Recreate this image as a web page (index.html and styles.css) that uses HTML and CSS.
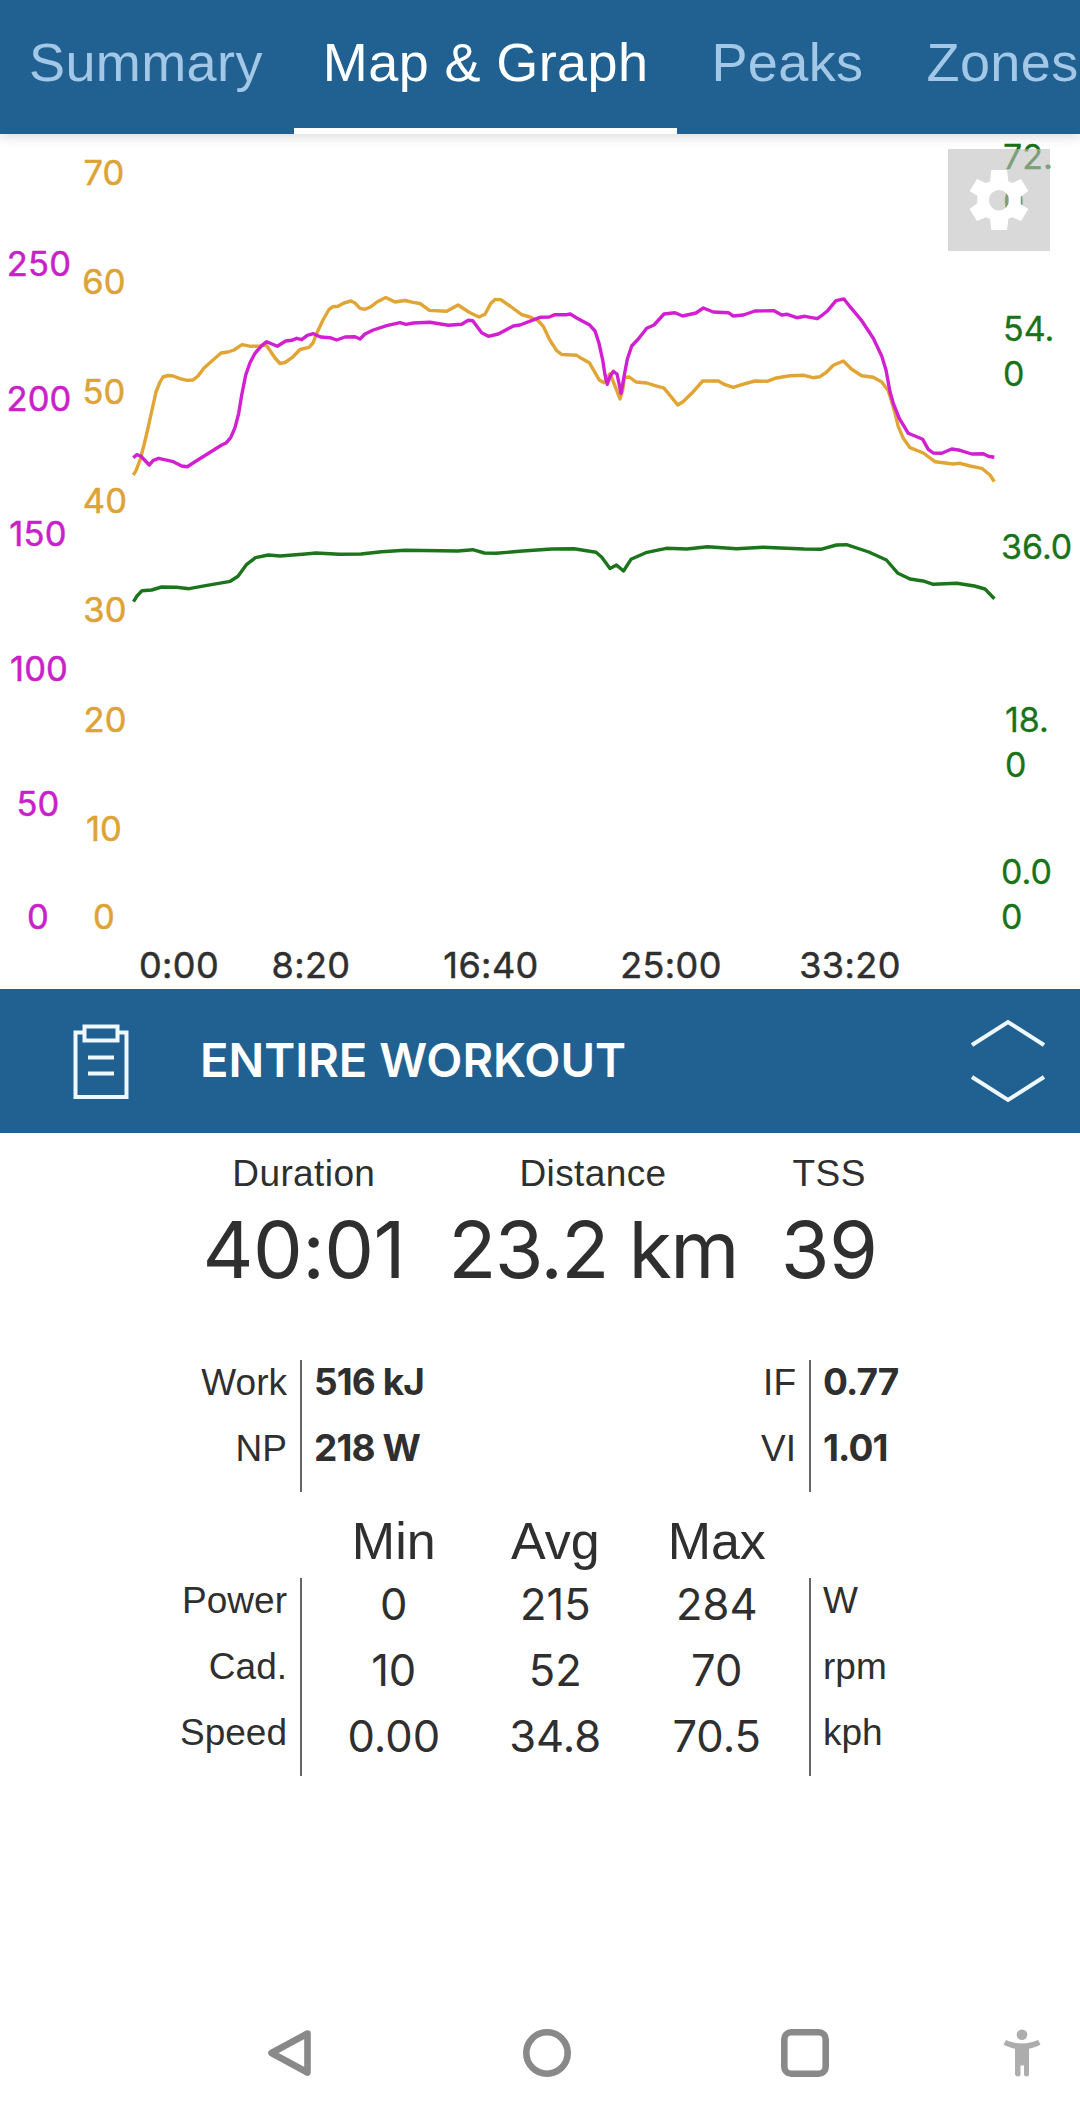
FILE: index.html
```
<!DOCTYPE html>
<html lang="en">
<head>
    <meta charset="UTF-8">
    <meta name="viewport" content="width=device-width, initial-scale=1.0">
    <title>Workout - Map &amp; Graph</title>
    <link rel="stylesheet" href="styles.css">
</head>
<body>
    <!-- Tabs -->
    <nav class="tabs">
        <a class="tab">Summary</a>
        <a class="tab active">Map &amp; Graph</a>
        <a class="tab">Peaks</a>
        <a class="tab">Zones</a>
    </nav>

    <!-- Graph -->
    <section class="graph">
        <svg class="chart" viewBox="0 134 1080 855" width="1080" height="855">
            <g class="axis power-axis">
                <text x="39" y="276">250</text>
                <text x="39" y="411">200</text>
                <text x="38" y="546">150</text>
                <text x="39" y="681">100</text>
                <text x="38" y="816">50</text>
                <text x="38" y="929">0</text>
            </g>
            <g class="axis cadence-axis">
                <text x="104" y="185">70</text>
                <text x="104" y="294">60</text>
                <text x="104" y="404">50</text>
                <text x="105" y="513">40</text>
                <text x="105" y="622">30</text>
                <text x="105" y="732">20</text>
                <text x="104" y="841">10</text>
                <text x="104" y="929">0</text>
            </g>
            <g class="axis speed-axis">
                <text x="1003" y="169">72.</text>
                <text x="1003" y="214">0</text>
                <text x="1003" y="341">54.</text>
                <text x="1003" y="386">0</text>
                <text x="1001" y="559">36.0</text>
                <text x="1005" y="732">18.</text>
                <text x="1005" y="777">0</text>
                <text x="1001" y="884">0.0</text>
                <text x="1001" y="929">0</text>
            </g>
            <g class="axis time-axis">
                <text x="179" y="978">0:00</text>
                <text x="311" y="978">8:20</text>
                <text x="491" y="978">16:40</text>
                <text x="671" y="978">25:00</text>
                <text x="850" y="978">33:20</text>
            </g>

            <polyline class="line speed" points="133.5,601.7 137,596 142,590.7 151.6,590 161.6,587 176.3,587.3 189.2,588.7 205.6,585.7 230.3,581.3 238,576.3 246.7,564.3 255.5,557.7 268.4,555 280,556 305.4,554 316,553 339.4,554.3 361,554 381.7,551.7 405,550.3 458,551 472.7,549.7 484.4,553 496,553.3 522.5,551 552,549 574,548.7 596,552.3 601.8,557.3 610,568.5 616.4,565 623.5,571 631,559.3 645.8,552.7 666.3,548.3 687,549 707.4,546.7 736.7,548.7 763,547.3 804,549 820.7,549.3 836.5,545 846.5,544.7 868.8,552 886.4,560 898,573.3 910,579 924.5,581.3 933.3,584.3 956.8,583.3 974.4,586 985,589 994.4,598.7"/>
            <polyline class="line cadence" points="133.3,475 136,470.7 140,460 144,445 148,428 152,410 156,392 160,382 163,377 168,375.5 173,376 180,378.6 187,380.3 193,380 198,376 204,368 213,360 221,353 228,352 234,350 242,344.7 251,346.3 260,346 266,345 269,349 275,358 280,363.5 285,362.5 292,357.7 300,349.5 309,347.3 313,343 317,332.7 323,320 329,309.5 333,306.7 338,306.3 344,303 351,301 355,303 360,308.3 365,309.3 371,306.7 377,302 385.7,297.5 395,302 405,300.5 413,302.4 420,303.5 429.5,310.4 446.7,311.3 458,305 470,312.7 479,317 485,314.3 490.7,303.5 495,299.5 500.7,299.6 510,306 521.7,314.7 530,317 538,320.5 543.5,326.7 549.5,339.5 556.7,350.7 561.7,354.5 576.7,355.3 581.7,358.6 589.3,362.7 595,372.7 599.3,380 604,382.7 610,373.7 615,386 620,399 622.7,390 624.5,377.5 629.3,377 636,382 646.7,383 655,385.7 664,388.2 671,396.7 677.7,405 683,401.7 691.7,393.3 702.7,381 718.3,381 725,384.7 733.3,387.3 741.7,384.7 755,381 767.3,381.3 775,378.3 790,375.7 804,375.3 812.7,377.7 820,376.7 826.7,372 833.3,365.3 843.3,361 851.7,369.3 861.7,375.7 873.3,377.3 881.7,382 888.3,390.7 891.7,401.7 895,413.3 898.3,426.7 903.3,438.3 910,447.7 923.3,453 935,461.7 953.3,464 960,463.3 970,466 981.7,468.3 990,475 994.3,481.7"/>
            <polyline class="line power" points="133.3,457.7 136.7,454.7 140.7,456 149.3,465 153.3,460.3 158.7,458.3 173.3,461.7 181.7,466 187.3,466.7 195,461.7 221.7,445 226,443 230.7,437.7 235,427.7 238.7,413.3 241.7,395 245.7,375 250,362.7 255,353.3 261.7,345.7 266.7,341.7 277.3,346.3 285.7,341 291.7,340.3 296.7,338.3 301.7,339.7 307.3,335.3 313.3,333.7 320.7,337 330,337.7 336.7,340 345,337 355,336.7 360,339 365,334 373.3,330 386.7,325.7 400,322.7 406,324.3 413.3,323 430,322.3 448.3,325.3 461.7,324.3 468.3,320.3 472.7,320.7 481.7,332.7 488.3,336.3 498.3,334 513.3,326 520,325 540,317.3 549.3,317 555,314.7 566.7,314.7 570.3,314 576.7,318 589.3,324.7 595,331 599,343.3 602.7,360 605,375 607.3,384.3 610,376.7 613.3,371.3 617,374 619,383.3 621,393.3 624,376.7 627.3,359.3 631.7,346 638.3,339 646.7,328.3 654,325 664,314 675,312.7 682.7,316 696,313 703.3,308 713.3,312 728.3,312.7 733.3,316 743.3,315 755,311 774,310.7 781.7,315 787.3,314.3 796.7,317.7 805,316.3 817.3,318.7 823.3,314.3 827.7,310.7 836,300.7 844,299 850,306.7 861.7,320.7 873.3,338.3 881.7,356 886,370 890,391.7 893.3,403.3 899.3,418.3 908.3,433.3 922.7,439.3 928.3,449.3 933.3,453 941.7,453.3 951.7,449 960,450.3 971.7,454 983.3,453.7 988.3,456.3 994.3,457.3"/>
        </svg>
        <button class="settings" aria-label="Graph settings">
            <svg viewBox="0 0 102 102" width="102" height="102">
                <path fill="#fff" fill-rule="evenodd" d="M43.3 21H59l1.4 11.5 4 1.6L73 30l7.4 12-7.7 5.7v7.6L80.4 60 73 72l-8.6-3.8-4 1.6L59 81H43.3L42 69.8l-4.2-1.6L29 72l-7.4-12 7.7-5.7v-7.6L21.6 42 29 30l8.6 4 4.4-1.6zM51 41a10.2 10.2 0 1 0 0 20.4A10.2 10.2 0 1 0 51 41z"/>
            </svg>
        </button>
    </section>

    <!-- Selected range -->
    <section class="range-bar">
        <svg class="clipboard" viewBox="0 0 58 76" width="58" height="76">
            <path d="M12 9.5H3.500V74H54.500V9.500H46M12.500 3.500H45.500V17.500H12.500zM16 34.500H42M16 50.500H42"/>
        </svg>
        <h1 class="range-title">ENTIRE WORKOUT</h1>
        <svg class="chevrons" viewBox="0 0 76 88" width="76" height="88">
            <path d="M2 28L38 5L74 28M2 60L38 83L74 60"/>
        </svg>
    </section>

    <!-- Workout stats -->
    <main class="stats">
        <div class="totals">
            <div class="total">
                <span class="total-label">Duration</span>
                <span class="total-value">40:01</span>
            </div>
            <div class="total">
                <span class="total-label">Distance</span>
                <span class="total-value distance">23.2 km</span>
            </div>
            <div class="total">
                <span class="total-label">TSS</span>
                <span class="total-value">39</span>
            </div>
        </div>

        <div class="metrics">
            <div class="names"><span>Work</span><span>NP</span></div>
            <div class="values"><span>516 kJ</span><span>218 W</span></div>
            <div class="names"><span>IF</span><span>VI</span></div>
            <div class="values"><span>0.77</span><span>1.01</span></div>
        </div>

        <div class="table-head">
            <span>Min</span>
            <span>Avg</span>
            <span>Max</span>
        </div>
        <div class="table">
            <div class="names"><span>Power</span><span>Cad.</span><span>Speed</span></div>
            <div class="cells">
                <span>0</span><span>215</span><span>284</span>
                <span>10</span><span>52</span><span>70</span>
                <span>0.00</span><span>34.8</span><span>70.5</span>
            </div>
            <div class="units"><span>W</span><span>rpm</span><span>kph</span></div>
        </div>
    </main>

    <!-- System navigation -->
    <footer class="system-nav">
        <svg class="nav-icon" viewBox="0 0 50 50" width="50" height="50">
            <path d="M42.500 5.500L6.500 25L42.500 44.500Z"/>
        </svg>
        <svg class="nav-icon" viewBox="0 0 50 50" width="50" height="50">
            <circle cx="24" cy="25" r="20.700"/>
        </svg>
        <svg class="nav-icon" viewBox="0 0 50 50" width="50" height="50">
            <rect x="4.300" y="4.300" width="41.400" height="41.400" rx="7"/>
        </svg>
        <svg class="person" viewBox="0 0 38 48" width="38" height="48">
            <circle cx="19" cy="5.800" r="5.300"/>
            <path d="M3 11C13 15.500 25 15.500 35 11L37.500 15.500C34 17.500 30 19 26 19.700V45.500Q26 47.500 23.500 47.500T21 45.500V36.500H17.500V45.500Q17.500 47.500 15 47.500T12 45.500V19.700C8 19 4 17.500.5 15.500Z"/>
        </svg>
    </footer>
</body>
</html>
```
FILE: styles.css
```
* {
    margin: 0;
    padding: 0;
    box-sizing: border-box;
}

body {
    width: 1080px;
    height: 2119px;
    display: flex;
    flex-direction: column;
    overflow: hidden;
    background: #fff;
    color: #2f2f2f;
    font-family: "Liberation Sans", Arial, sans-serif;
}

/* Tabs */
.tabs {
    display: flex;
    height: 134px;
    flex-shrink: 0;
    background: #206192;
    box-shadow: 0 2px 12px rgba(0, 0, 0, 0.16);
    position: relative;
    z-index: 1;
}

.tab {
    flex-shrink: 0;
    height: 134px;
    padding: 0 29px 0 34px;
    border-bottom: 6px solid transparent;
    font-size: 54px;
    line-height: 125px;
    letter-spacing: 0.4px;
    color: #a3c7e6;
}

.tab:first-child {
    padding-left: 29px;
    padding-right: 31px;
}

.tab.active {
    padding: 0 29px;
    color: #fff;
    border-bottom-color: #fff;
}

/* Graph */
.graph {
    position: relative;
    height: 855px;
    flex-shrink: 0;
}

.chart {
    display: block;
}

.axis text {
    font-family: Inter, "Liberation Sans", sans-serif;
    font-size: 34.5px;
    letter-spacing: 0.2px;
    text-anchor: middle;
    stroke-width: 0.5;
}

.power-axis {
    fill: #c921c9;
    stroke: #c921c9;
}

.cadence-axis {
    fill: #dda335;
    stroke: #dda335;
}

.axis.speed-axis text {
    fill: #1a7318;
    stroke: #1a7318;
    stroke-width: 0.3;
    font-size: 34px;
    letter-spacing: 0;
    text-anchor: start;
}

.axis.time-axis text {
    fill: #2f2f2f;
    stroke: #2f2f2f;
    font-size: 36px;
    letter-spacing: 0.4px;
}

.line {
    fill: none;
    stroke-width: 3.4;
    stroke-linejoin: round;
}

.line.power {
    stroke: #d11fd1;
}

.line.cadence {
    stroke: #e0a535;
}

.line.speed {
    stroke: #1c751b;
}

.settings {
    position: absolute;
    top: 15px;
    left: 948px;
    width: 102px;
    height: 102px;
    border: none;
    background: rgba(190, 190, 190, 0.59);
}

.settings svg {
    display: block;
}

/* Selected range */
.range-bar {
    display: flex;
    align-items: center;
    height: 144px;
    flex-shrink: 0;
    padding: 0 34px 0 72px;
    background: #206192;
}

.clipboard,
.chevrons {
    fill: none;
    stroke: #eef8ff;
    stroke-width: 4;
}

.range-title {
    flex: 1;
    margin: -4px 0 0 70px;
    font-family: Inter, sans-serif;
    font-size: 47px;
    font-weight: 600;
    color: #fff;
}

/* Workout stats */
.stats {
    flex: 1;
}

.totals {
    display: flex;
    justify-content: center;
    gap: 43px;
    padding-top: 21px;
}

.total {
    display: flex;
    flex-direction: column;
    align-items: center;
}

.total-label {
    font-size: 37px;
    line-height: 40px;
    letter-spacing: 0.4px;
}

.total-value {
    font-family: Inter, sans-serif;
    font-size: 79px;
    line-height: 111px;
    letter-spacing: -0.6px;
}

.total-value.distance {
    letter-spacing: -1.6px;
}

/* Work, NP, IF and VI */
.metrics {
    display: grid;
    grid-template-columns: 300px 394px 115px 1fr;
    margin-top: 55px;
    font-size: 37px;
    line-height: 66px;
}

.names,
.values,
.units {
    display: flex;
    flex-direction: column;
}

.names {
    padding-right: 13px;
    text-align: right;
}

.values {
    padding-left: 12px;
    border-left: 2px solid #666;
    height: 132px;
    font-family: Inter, sans-serif;
    font-weight: 700;
    letter-spacing: -0.9px;
}

.metrics .names span {
    margin: -10px 0 10px;
}

.metrics .values span {
    margin: -11px 0 11px;
}

/* Min / Avg / Max */
.table-head {
    display: grid;
    grid-template-columns: repeat(3, 161.500px);
    padding: 17px 0 4px 313px;
    text-align: center;
    font-size: 52px;
    line-height: 65px;
}

.table {
    display: grid;
    grid-template-columns: 300px 511px 1fr;
    height: 198px;
    font-size: 37px;
    line-height: 66px;
}

.table .names,
.units {
    margin-top: -10px;
}

.cells {
    display: grid;
    grid-template-columns: repeat(3, 161.500px);
    height: 198px;
    padding-left: 11px;
    border-left: 2px solid #666;
    border-right: 2px solid #666;
    font-family: Inter, sans-serif;
    font-size: 43.5px;
    text-align: center;
    line-height: 52px;
}

.units {
    padding-left: 12px;
}

/* System navigation */
.system-nav {
    display: grid;
    grid-template-columns: 258px 257px 258px 1fr;
    align-items: center;
    height: 132px;
    padding-left: 265px;
}

.nav-icon {
    fill: none;
    stroke: #898989;
    stroke-width: 6.600;
    stroke-linejoin: round;
}

.person {
    fill: #adadad;
    margin-left: -35px;
}
```
